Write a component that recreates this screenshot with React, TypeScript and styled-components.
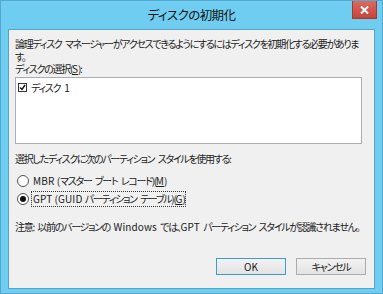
import React from 'react';
import styled, { createGlobalStyle } from 'styled-components';

const Global = createGlobalStyle`
  html, body { margin: 0; padding: 0; background: #6fcdf2; }
  body {
    font-family: "Noto Sans CJK JP", "Noto Sans", sans-serif;
    font-feature-settings: "palt";
    color: #1a1a1a;
  }
`;

const Window = styled.div`
  width: 383px;
  height: 294px;
  box-sizing: border-box;
  background: #6fcdf2;
  border: 1px solid #53a9cf;
  padding: 0 7px 4px 7px;
  display: flex;
  flex-direction: column;
`;

const TitleBar = styled.div`
  height: 28px;
  display: grid;
  grid-template-columns: 1fr auto 1fr;
  align-items: start;
`;

const Title = styled.div`
  grid-column: 2;
  font-size: 12.5px;
  line-height: 28px;
  color: #111;
  letter-spacing: -0.6px;
`;

const CloseButton = styled.div`
  grid-column: 3;
  justify-self: end;
  width: 25px;
  height: 18px;
  margin-right: -2px;
  background: linear-gradient(#d96b60, #c6443a);
  border: 1px solid #a7392f;
  border-top: none;
  box-sizing: border-box;
  display: flex;
  align-items: center;
  justify-content: center;
`;

const Client = styled.div`
  flex: 1;
  background: #f0f0f0;
  border: 1px solid #58a2c4;
  padding: 8px 12px 0 6px;
  display: flex;
  flex-direction: column;
  font-size: 10px;
  letter-spacing: -1.3px;
  word-spacing: 2.5px;
`;

const Text = styled.div<{ $top?: number }>`
  line-height: 12px;
  margin-top: ${p => p.$top ?? 0}px;
  white-space: nowrap;
`;

const Latin = styled.span`
  letter-spacing: 0.1px;
  word-spacing: 0;
`;

const Key = styled.span`
  text-decoration: underline;
  letter-spacing: 0;
`;

const ListBox = styled.div`
  margin-top: 2px;
  height: 67px;
  box-sizing: border-box;
  background: #fff;
  border: 1px solid #abadb3;
  padding: 2px 2px;
`;

const ListItem = styled.div`
  display: flex;
  align-items: center;
  gap: 4px;
  height: 14px;
`;

const Check = styled.div`
  width: 9px;
  height: 9px;
  box-sizing: border-box;
  border: 1px solid #333;
  background: #fff;
  display: flex;
  align-items: center;
  justify-content: center;
`;

const RadioGroup = styled.div`
  margin-top: 7px;
  padding-left: 2px;
  display: flex;
  flex-direction: column;
`;

const RadioRow = styled.div`
  display: flex;
  align-items: center;
  height: 18px;
  gap: 3px;
`;

const RadioDot = styled.div<{ $on?: boolean }>`
  width: 12px;
  height: 12px;
  box-sizing: border-box;
  border-radius: 50%;
  border: 1px solid #555;
  background: #fff;
  display: flex;
  align-items: center;
  justify-content: center;
  &::after {
    content: '';
    display: ${p => (p.$on ? 'block' : 'none')};
    width: 6px;
    height: 6px;
    border-radius: 50%;
    background: #111;
  }
`;

const RadioLabel = styled.span<{ $focus?: boolean }>`
  line-height: 14px;
  padding: 0 1px;
  outline: ${p => (p.$focus ? '1px dotted #333' : 'none')};
`;

const ButtonRow = styled.div`
  margin-top: auto;
  margin-bottom: 13px;
  margin-right: -4px;
  display: flex;
  justify-content: flex-end;
  gap: 10px;
`;

const Button = styled.div<{ $default?: boolean }>`
  width: 70px;
  height: 17px;
  box-sizing: border-box;
  border: 1px solid ${p => (p.$default ? '#3c9ad8' : '#acacac')};
  background: linear-gradient(#f2f2f2, #e3e3e3);
  display: flex;
  align-items: center;
  justify-content: center;
`;

export default function App() {
  return (
    <>
      <Global />
      <Window>
        <TitleBar>
          <Title>ディスクの初期化</Title>
          <CloseButton>
            <svg width="9" height="8" viewBox="0 0 9 8">
              <path d="M1 0.5 L8 7.5 M8 0.5 L1 7.5" stroke="#fff" strokeWidth="2" />
            </svg>
          </CloseButton>
        </TitleBar>
        <Client>
          <Text>
            論理ディスク マネージャーがアクセスできるようにするにはディスクを初期化する必要がありま
          </Text>
          <Text $top={1}>す。</Text>
          <Text $top={0}>
            ディスクの選択(<Key>S</Key>):
          </Text>
          <ListBox>
            <ListItem>
              <Check>
                <svg width="7" height="7" viewBox="0 0 7 7">
                  <path d="M1 3.5 L3 5.5 L6 1" stroke="#111" strokeWidth="1.4" fill="none" />
                </svg>
              </Check>
              ディスク <Latin>1</Latin>
            </ListItem>
          </ListBox>
          <Text $top={9}>選択したディスクに次のパーティション スタイルを使用する:</Text>
          <RadioGroup>
            <RadioRow>
              <RadioDot />
              <RadioLabel>
                <Latin>MBR (</Latin>マスター ブート レコード)(<Key>M</Key>)
              </RadioLabel>
            </RadioRow>
            <RadioRow>
              <RadioDot $on />
              <RadioLabel $focus>
                <Latin>GPT (GUID </Latin>パーティション テーブル)(<Key>G</Key>)
              </RadioLabel>
            </RadioRow>
          </RadioGroup>
          <Text $top={13}>
            注意: 以前のバージョンの <Latin>Windows</Latin> では、<Latin>GPT</Latin> パーティション スタイルが認識されません。
          </Text>
          <ButtonRow>
            <Button $default><Latin>OK</Latin></Button>
            <Button>キャンセル</Button>
          </ButtonRow>
        </Client>
      </Window>
    </>
  );
}
